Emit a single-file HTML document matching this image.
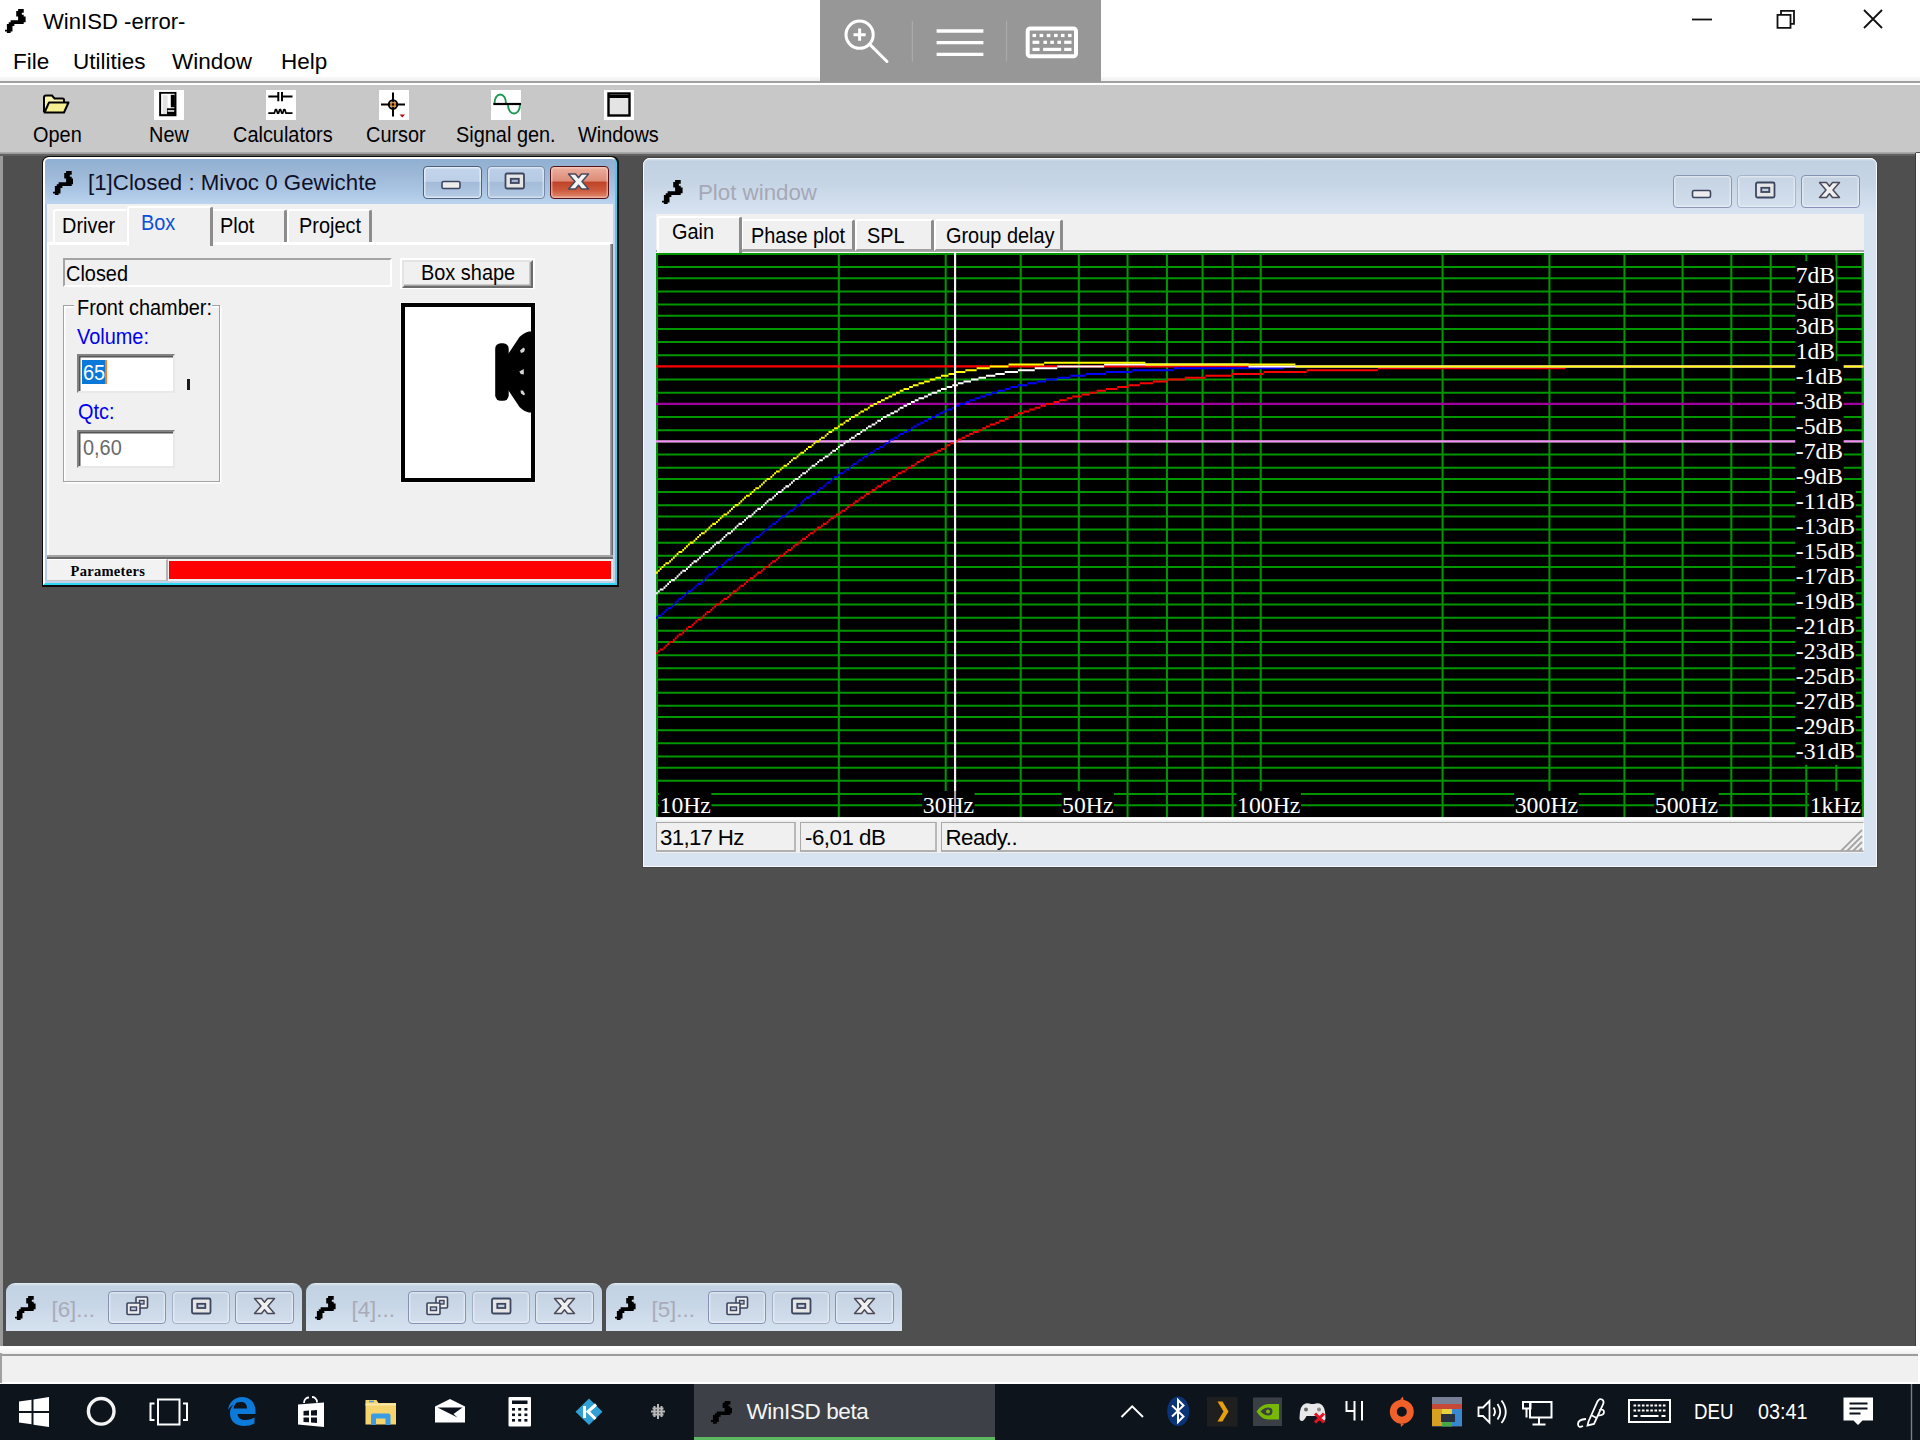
<!DOCTYPE html>
<html>
<head>
<meta charset="utf-8">
<title>WinISD</title>
<style>
*{box-sizing:border-box;margin:0;padding:0}
html,body{width:1920px;height:1440px;overflow:hidden;background:#505050;font-family:"Liberation Sans",sans-serif;color:#000}
.abs{position:absolute}
.t{position:absolute;white-space:nowrap;line-height:1}
#top{left:0;top:0;width:1920px;height:78px;background:#fff}
#overlay{left:819.500px;top:0;width:281px;height:81.600px;background:#979797}
#tbsep{left:0;top:76.500px;width:1920px;height:9px;background:linear-gradient(#f8f8f8 0,#f1f1f1 3.800px,#a4a4a4 4.400px,#8e8e8e 5.100px,#b0b0b0 5.900px,#fff 6.500px,#fff 7.700px,#d4d4d4 8.500px,#c8c8c8 9px)}
#toolbar{left:0;top:85px;width:1920px;height:68px;background:#c8c8c8}
#mdi{left:0;top:152px;width:1920px;height:1194px;background:#4f4f4f}
#status{left:0;top:1346px;width:1918px;height:36px;background:#f0f0f0}
#taskbar{left:0;top:1384px;width:1920px;height:56px;background:#0e141c}
.tl{font-size:22.5px;transform:scaleX(.885);transform-origin:0 0}
.ico{position:absolute;top:90px;width:30px;height:30px;background:#fff}
.ms{font-size:22.5px;transform:scaleX(.885);transform-origin:0 0}
.cb{position:absolute;border-radius:4px}
.sunk{position:absolute;background:#fff;border:2px solid;border-color:#828282 #e8e8e8 #e8e8e8 #828282;box-shadow:inset 1.5px 1.5px 0 #555}
</style>
</head>
<body>
<div id="top" class="abs"></div>
<div id="tbsep" class="abs"></div>
<div id="overlay" class="abs"></div>
<div id="toolbar" class="abs"></div>
<div id="mdi" class="abs"></div>
<div class="abs" style="left:0;top:151.800px;width:1916px;height:4.600px;background:linear-gradient(#b0b0b0 0,#989898 45%,#626262 50%,#5e5e5e 100%)"></div>
<div class="abs" style="left:0;top:156px;width:3px;height:1190px;background:#9a9a9a"></div>
<div class="abs" style="left:1915px;top:152.500px;width:1px;height:1193.500px;background:#3c3c3c"></div><div class="abs" style="left:1916px;top:152.500px;width:4px;height:1194px;background:#fbfbfb"></div>
<div class="abs" style="left:0;top:1346px;width:1920px;height:38px;background:#fff"></div>
<div id="status" class="abs"></div>
<div class="abs" style="left:0;top:1346px;width:1920px;height:7px;background:linear-gradient(#fff,#f4f4f4)"></div>
<div class="abs" style="left:0;top:1353.500px;width:1918px;height:2.200px;background:#9c9c9c"></div>
<div class="abs" style="left:0;top:1353px;width:2px;height:30px;background:#a0a0a0"></div>
<div id="taskbar" class="abs"></div>

<!-- title + menu -->
<svg class="abs" style="left:5.4px;top:9.1px" width="20.6" height="24.4" viewBox="0 0 11 13" preserveAspectRatio="none"><path d="M7 0h3v1.04h-3zM6 1h4v1.04h-4zM6 2h3v1.04h-3zM6 3h4v1.04h-4zM7 4h4v1.04h-4zM7 5h4v1.04h-4zM3 6h8v1.04h-8zM2 7h8v1.04h-8zM1 8h4v1.04h-4zM1 9h3v1.04h-3zM1 10h3v1.04h-3zM0 11h4v1.04h-4zM1 12h2v1.04h-2z" fill="#000"/></svg>
<div class="t" style="left:43px;top:11px;font-size:22.1px">WinISD -error-</div>
<div class="t" style="left:13px;top:51px;font-size:22.5px">File</div>
<div class="t" style="left:73px;top:51px;font-size:22.5px">Utilities</div>
<div class="t" style="left:172px;top:51px;font-size:22.5px">Window</div>
<div class="t" style="left:281px;top:51px;font-size:22.5px">Help</div>

<!-- window controls -->
<svg class="abs" style="left:1680px;top:0" width="240" height="44" viewBox="0 0 240 44" fill="none" stroke="#111" stroke-width="1.8">
<path d="M12 19.5H32"/>
<path d="M97.5 14.800h13v13h-13zM101 14.800v-4h13v13h-3.500"/>
<path d="M184 10l18 18M202 10l-18 18"/>
</svg>

<!-- overlay icons -->
<svg class="abs" style="left:819px;top:0" width="282" height="82" viewBox="0 0 282 82" fill="none" stroke="#fff" stroke-width="3" stroke-linecap="round">
<circle cx="40.600" cy="34.700" r="13.600"/><path d="M51 44.600L68 61.500"/><path d="M34.500 34.700h12.200M40.600 28.600v12.200" stroke-linecap="butt"/>
<path d="M93.400 21v40M187.500 21v40" stroke="#aaa" stroke-width="1.200"/>
<path d="M117.600 31h46.800M117.600 42.600h46.800M117.600 54.400h46.800" stroke-linecap="butt" stroke-width="3.300"/>
<rect x="208.700" y="28.400" width="48.300" height="27.800" rx="2.500" stroke-width="4"/>
<g stroke="none" fill="#fff"><rect x="213.500" y="33.900" width="3.600" height="3.200"/><rect x="220.600" y="33.900" width="3.600" height="3.200"/><rect x="227.800" y="33.900" width="3.600" height="3.200"/><rect x="235" y="33.900" width="3.600" height="3.200"/><rect x="241.900" y="33.900" width="3.600" height="3.200"/><rect x="249" y="33.900" width="3.600" height="3.200"/>
<rect x="213.500" y="40.700" width="6.800" height="3.200"/><rect x="224.400" y="40.700" width="3.600" height="3.200"/><rect x="231.300" y="40.700" width="3.600" height="3.200"/><rect x="238.400" y="40.700" width="3.600" height="3.200"/><rect x="245.200" y="40.700" width="7.300" height="3.200"/>
<rect x="213.500" y="47.800" width="7.100" height="3.200"/><rect x="224.100" y="47.800" width="18.100" height="3.200"/><rect x="245.200" y="47.800" width="7.300" height="3.200"/></g>
</svg>

<!-- toolbar icons -->
<div class="ico" style="left:154px"></div>
<div class="ico" style="left:266px"></div>
<div class="ico" style="left:379px"></div>
<div class="ico" style="left:491px"></div>
<div class="ico" style="left:604px"></div>
<svg class="abs" style="left:40px;top:90px" width="34" height="30" viewBox="0 0 34 30"><path d="M4 22V7.500q0-2 2-2h6l2.500 3h8q1.500 0 1.500 1.500V12" fill="#f8f4b0" stroke="#000" stroke-width="2"/><path d="M4.500 22.500L9 12.500h19.500L24 22.500z" fill="#f6f090" stroke="#000" stroke-width="2" stroke-linejoin="round"/></svg>
<svg class="abs" style="left:154px;top:90px" width="30" height="30" viewBox="0 0 30 30"><rect x="6.200" y="3" width="15.200" height="22.200" fill="#e2e2e2" stroke="#000" stroke-width="2.100"/><path d="M8 24V4.500H20.500" stroke="#fff" stroke-width="1.400" fill="none"/><rect x="13.600" y="4.800" width="3.400" height="13.400" fill="#fff"/><rect x="16.800" y="4.800" width="4" height="12.400" fill="#000"/><rect x="13" y="18.300" width="8" height="6.300" fill="#000"/><rect x="13.600" y="20.200" width="6.600" height="1.500" fill="#fff"/></svg>
<svg class="abs" style="left:266px;top:90px" width="30" height="30" viewBox="0 0 30 30" fill="none" stroke="#000" stroke-width="2"><path d="M2.300 6.500h10.500M16.500 6.500h10M12.300 2v9.200M16 2v9.200"/><path d="M2.300 23.200H8.300l1.200-3.700h.9l1.200 3.700h.9l1.200-3.700h.9l1.200 3.700h.9l1.200-3.700h.9l1.200 3.700H26.500" stroke-width="1.700" stroke-linejoin="round"/></svg>
<svg class="abs" style="left:379px;top:90px" width="30" height="30" viewBox="0 0 30 30" fill="none" stroke="#000" stroke-width="2"><path d="M2 14.500h24M14 2.500v24"/><circle cx="14" cy="14.500" r="4.200" stroke="#000"/><circle cx="14" cy="14.500" r="2" stroke="#d88020" stroke-width="1.6"/><path d="M20.500 24.500h5.500l-2.700 3z" fill="#b01010" stroke="none"/></svg>
<svg class="abs" style="left:491px;top:90px" width="30" height="30" viewBox="0 0 30 30" fill="none" stroke="#000" stroke-width="2"><path d="M3.500 13.500c0-12 11.500-12 11.500 0M17 14.500c0 12 12 12 12 0" stroke="#1a9850" stroke-width="1.900"/><path d="M2.300 14h27.700" stroke-width="2.200"/></svg>
<svg class="abs" style="left:604px;top:90px" width="30" height="30" viewBox="0 0 30 30"><rect x="4.500" y="3.500" width="21" height="22" fill="#e4e4e4" stroke="#000" stroke-width="2.4"/><path d="M4 6.500h22" stroke="#000" stroke-width="3"/></svg>

<!-- toolbar labels -->
<div class="t tl" style="left:33px;top:123.8px">Open</div>
<div class="t tl" style="left:149px;top:123.8px">New</div>
<div class="t tl" style="left:233px;top:123.8px">Calculators</div>
<div class="t tl" style="left:366px;top:123.8px">Cursor</div>
<div class="t tl" style="left:456px;top:123.8px">Signal gen.</div>
<div class="t tl" style="left:578px;top:123.8px">Windows</div>
<!-- window 1 -->
<div class="abs" style="left:42px;top:156px;width:576.700px;height:430.600px;background:#0a0a0a;border-radius:7px 7px 0 0"></div>
<div class="abs" style="left:43px;top:157px;width:574px;height:428px;border-radius:6px 6px 0 0;border:2px solid;border-color:#fff #3dd0f5 #2cd8f4 #fff;background:#c3d1ea"></div>
<div class="abs" style="left:45px;top:159px;width:570px;height:45.500px;border-radius:4px 4px 0 0;background:linear-gradient(#8fb0d2 0,#9cb7d6 30%,#aac6e4 70%,#bdd5ef 100%)"></div>
<div class="abs" style="left:45px;top:204px;width:1.700px;height:377px;background:#b4cbe8"></div>
<div class="abs" style="left:46.700px;top:204px;width:566.100px;height:376.800px;background:#f0f0f0"></div>
<svg class="abs" style="left:52.8px;top:170.8px" width="20.6" height="24.4" viewBox="0 0 11 13" preserveAspectRatio="none"><path d="M7 0h3v1.04h-3zM6 1h4v1.04h-4zM6 2h3v1.04h-3zM6 3h4v1.04h-4zM7 4h4v1.04h-4zM7 5h4v1.04h-4zM3 6h8v1.04h-8zM2 7h8v1.04h-8zM1 8h4v1.04h-4zM1 9h3v1.04h-3zM1 10h3v1.04h-3zM0 11h4v1.04h-4zM1 12h2v1.04h-2z" fill="#000"/></svg>
<div class="t" style="left:88px;top:172px;font-size:22.3px;color:#101028">[1]Closed : Mivoc 0 Gewichte</div>
<!-- caption buttons -->
<div class="cb" style="left:422.500px;top:165.500px;width:59px;height:33px;border:1.500px solid #4e607e;box-shadow:inset 0 0 0 1.500px rgba(255,255,255,.55);background:linear-gradient(#c3d5eb 0,#bdd0e8 46%,#a3bbd8 50%,#b5cbe6 100%)"></div>
<div class="cb" style="left:486.500px;top:165.500px;width:58px;height:33px;border:1.500px solid #7589a8;box-shadow:inset 0 0 0 1.500px rgba(255,255,255,.45);background:linear-gradient(#bdd0e8 0,#b6cae4 46%,#a4bcd9 50%,#b3c9e4 100%)"></div>
<div class="cb" style="left:549.500px;top:165.500px;width:59.5px;height:33px;border:1.800px solid #561018;box-shadow:inset 0 0 0 1.500px rgba(255,220,210,.5);background:linear-gradient(#eeb0a0 0,#dc8c78 44%,#c04428 50%,#cc5a3c 75%,#e08c70 100%)"></div>
<svg class="abs" style="left:422px;top:165px" width="190" height="34" viewBox="0 0 190 34">
<rect x="20" y="16.500" width="18" height="7" rx="1.500" fill="#ececec" stroke="#3c4660" stroke-width="1.600"/>
<rect x="83.500" y="8.500" width="18.500" height="15" rx="1.500" fill="#e6e6e6" stroke="#3c4660" stroke-width="1.800"/>
<rect x="88.800" y="13.800" width="8" height="4.200" fill="#aab4cc" stroke="#3c4660" stroke-width="1.800"/>
<path d="M146.500 9h7l3 3.800 3-3.800h7l-6.500 7.500 6.500 7.500h-7l-3-3.800-3 3.800h-7l6.500-7.500z" fill="#f4f4f4" stroke="#4a4a5a" stroke-width="1.500" stroke-linejoin="round"/>
</svg>
<!-- tabs -->
<div class="abs" style="left:52.500px;top:208.700px;width:75px;height:34.300px;border-top:2px solid #fff;border-left:2px solid #fff;border-right:2px solid #f0f0f0;border-radius:3px 3px 0 0"></div>
<div class="abs" style="left:211px;top:208.700px;width:76px;height:34.300px;border-top:2px solid #fff;border-left:2px solid #fff;border-right:3px solid #8c8c8c;border-radius:3px 3px 0 0"></div>
<div class="abs" style="left:287px;top:208.700px;width:85px;height:34.300px;border-top:2px solid #fff;border-left:2px solid #fff;border-right:3px solid #8c8c8c;border-radius:3px 3px 0 0"></div>
<div class="abs" style="left:47px;top:242px;width:564px;height:2.500px;background:#fff"></div>
<div class="abs" style="left:126.500px;top:205.500px;width:86px;height:40px;background:#f0f0f0;border-top:2px solid #fff;border-left:2px solid #fff;border-right:3.500px solid #8c8c8c;border-radius:3px 3px 0 0"></div>
<div class="abs" style="left:47px;top:244px;width:2px;height:312px;background:#fff"></div>
<div class="abs" style="left:610px;top:244px;width:2.800px;height:315px;background:linear-gradient(90deg,#a4a4a4 45%,#6a6a6a 55%)"></div>
<div class="abs" style="left:47px;top:555px;width:565.800px;height:4px;background:linear-gradient(#a4a4a4 48%,#6a6a6a 52%)"></div>
<div class="t ms" style="left:62px;top:215.2px">Driver</div>
<div class="t ms" style="left:141px;top:212px;color:#0a50d8">Box</div>
<div class="t ms" style="left:220px;top:215.2px">Plot</div>
<div class="t ms" style="left:298.500px;top:215.2px">Project</div>
<!-- closed field -->
<div class="abs" style="left:62.500px;top:258px;width:329.500px;height:29px;border:2px solid;border-color:#a4a4a4 #fff #fff #a4a4a4;background:#f0f0f0"></div>
<div class="t ms" style="left:66px;top:262.5px">Closed</div>
<!-- box shape button -->
<div class="abs" style="left:400px;top:257.500px;width:135px;height:31.500px;border:2px solid;border-color:#fff #fff #fff #fff;background:#f0f0f0"></div>
<div class="abs" style="left:402px;top:259.500px;width:131px;height:28.500px;border:2px solid;border-color:#e4e4e4 #6c6c6c #6c6c6c #e4e4e4;box-shadow:inset -1.500px -1.500px 0 #a4a4a4;background:#f0f0f0"></div>
<div class="t ms" style="left:421px;top:262.2px">Box shape</div>
<!-- group box -->
<div class="abs" style="left:62.500px;top:305px;width:157px;height:177px;border:1.500px solid #a2a2a2;box-shadow:1.500px 1.500px 0 #fff,inset 1.500px 1.500px 0 #fff"></div>
<div class="abs" style="left:74px;top:298px;width:138px;height:20px;background:#f0f0f0"></div>
<div class="t ms" style="left:77px;top:296.7px">Front chamber:</div>
<div class="t ms" style="left:76.500px;top:325.7px;color:#0000f0">Volume:</div>
<div class="sunk" style="left:77px;top:354px;width:98px;height:38.500px"></div>
<div class="abs" style="left:82.200px;top:360.200px;width:23px;height:23.700px;background:#0a78d8"></div>
<div class="abs" style="left:105.200px;top:360.200px;width:1.900px;height:23.700px;background:#f58220"></div>
<div class="t ms" style="left:83px;top:362.2px;color:#fff">65</div>
<div class="abs" style="left:187px;top:379px;width:2.800px;height:11px;background:#1a1a1a"></div>
<div class="t ms" style="left:78px;top:401.2px;color:#0000f0">Qtc:</div>
<div class="sunk" style="left:77px;top:429.500px;width:98px;height:38px"></div>
<div class="t ms" style="left:83px;top:437.4px;color:#6a6a6a">0,60</div>
<!-- box picture -->
<div class="abs" style="left:399.500px;top:302px;width:136px;height:181px;background:#f8f8f8"></div>
<div class="abs" style="left:400.500px;top:303px;width:134px;height:179px;background:#fff;border:4.500px solid #000"></div>
<svg class="abs" style="left:490px;top:326px" width="42" height="92" viewBox="0 0 42 92">
<rect x="5.200" y="17.200" width="13.500" height="57.600" rx="5.500" fill="#000"/>
<path d="M17.500 29L29.500 11Q34 6.500 39 5.500H41.500V86.500H39Q34 85.500 29.500 81L17.500 63z" fill="#000"/>
<path d="M30 24.500l3.500-3 1.500 1.500-1 3-3 1zM29.300 45.500l4.500-2.500v5.500l-3-.5zM30.500 64.500l2.500 0 2 3.500-1 1.500-3-2z" fill="#d4d4d4"/>
</svg>
<!-- status -->
<div class="abs" style="left:47px;top:559px;width:121px;height:21.500px;background:#f2f2f2;border-right:2px solid #b4b4b4;border-bottom:1.500px solid #c4c4c4;border-top:1.500px solid #fff"></div>
<div class="abs" style="left:168.800px;top:560.600px;width:442.300px;height:18.600px;background:#ff0000"></div>
<div class="t" style="left:70.500px;top:563.600px;font-family:'Liberation Serif',serif;font-weight:bold;font-size:14.500px;letter-spacing:0.300px">Parameters</div>
<!-- plot window -->
<div class="abs" style="left:643px;top:157.500px;width:1234px;height:709px;border-radius:7px 7px 0 0;background:#d7e3f1;box-shadow:0 0 0 1px #444"></div>
<div class="abs" style="left:643px;top:157.500px;width:1234px;height:56.500px;border-radius:7px 7px 0 0;background:linear-gradient(#e4ecf4 0,#c2d1e1 3px,#c6d5e5 45%,#d7e3f1 100%)"></div>
<div class="abs" style="left:643px;top:157.500px;width:1234px;height:709px;border-radius:7px 7px 0 0;border:1.800px solid #f6f9fd"></div>
<div class="abs" style="left:656px;top:213.500px;width:1208px;height:639px;background:#f0f0f0"></div>
<svg class="abs" style="left:662px;top:180px" width="20.6" height="24.4" viewBox="0 0 11 13" preserveAspectRatio="none"><path d="M7 0h3v1.04h-3zM6 1h4v1.04h-4zM6 2h3v1.04h-3zM6 3h4v1.04h-4zM7 4h4v1.04h-4zM7 5h4v1.04h-4zM3 6h8v1.04h-8zM2 7h8v1.04h-8zM1 8h4v1.04h-4zM1 9h3v1.04h-3zM1 10h3v1.04h-3zM0 11h4v1.04h-4zM1 12h2v1.04h-2z" fill="#000"/></svg>
<div class="t" style="left:698px;top:182px;font-size:22.3px;color:#a6a8b6">Plot window</div>
<!-- caption buttons -->
<div class="cb" style="left:1673px;top:174.500px;width:59px;height:33px;border:1.500px solid #8a96b4;box-shadow:inset 0 0 0 1.500px rgba(255,255,255,.4);background:linear-gradient(#c4d2e2,#d2deec)"></div>
<div class="cb" style="left:1736.500px;top:174.500px;width:59px;height:33px;border:1.500px solid #a8b4cc;box-shadow:inset 0 0 0 1.500px rgba(255,255,255,.4);background:linear-gradient(#c6d4e4,#d4e0ee)"></div>
<div class="cb" style="left:1800.500px;top:174.500px;width:59px;height:33px;border:1.500px solid #8590b4;box-shadow:inset 0 0 0 1.500px rgba(255,255,255,.4);background:linear-gradient(#c4d2e2,#d2deec)"></div>
<svg class="abs" style="left:1673px;top:174px" width="190" height="34" viewBox="0 0 190 34">
<rect x="19.500" y="16.500" width="18" height="7" rx="1.500" fill="#ececec" stroke="#3c4660" stroke-width="1.600"/>
<rect x="83" y="8.500" width="18.500" height="15" rx="1.500" fill="#e6e6e6" stroke="#3c4660" stroke-width="1.800"/>
<rect x="88.300" y="13.800" width="8" height="4.200" fill="#c8cede" stroke="#3c4660" stroke-width="1.800"/>
<path d="M146.500 8.500h7l3 3.800 3-3.800h7l-6.500 7.500 6.500 7.500h-7l-3-3.800-3 3.800h-7l6.500-7.500z" fill="#f0f0f0" stroke="#4a4a5a" stroke-width="1.500" stroke-linejoin="round"/>
</svg>
<!-- tabs -->
<div class="abs" style="left:656px;top:249.500px;width:1208px;height:2px;background:#a8a8a8"></div>
<div class="abs" style="left:656px;top:251.500px;width:1208px;height:1.500px;background:#fff"></div>
<div class="abs" style="left:741px;top:219px;width:113.500px;height:31.500px;background:#f0f0f0;border-top:2px solid #fff;border-left:2px solid #fff;border-right:3px solid #8c8c8c;border-bottom:2px solid #a0a0a0;border-radius:3px 3px 0 0"></div>
<div class="abs" style="left:855px;top:219px;width:78.500px;height:31.500px;background:#f0f0f0;border-top:2px solid #fff;border-left:2px solid #fff;border-right:3px solid #8c8c8c;border-bottom:2px solid #a0a0a0;border-radius:3px 3px 0 0"></div>
<div class="abs" style="left:934px;top:219px;width:129px;height:31.500px;background:#f0f0f0;border-top:2px solid #fff;border-left:2px solid #fff;border-right:3px solid #8c8c8c;border-bottom:2px solid #a0a0a0;border-radius:3px 3px 0 0"></div>
<div class="abs" style="left:657px;top:215.500px;width:85px;height:38px;background:#f0f0f0;border-top:2px solid #fff;border-left:2px solid #fff;border-right:3px solid #8c8c8c;border-radius:3px 3px 0 0"></div>
<div class="t ms" style="left:672px;top:221.4px">Gain</div>
<div class="t ms" style="left:751px;top:224.9px">Phase plot</div>
<div class="t ms" style="left:867px;top:224.9px">SPL</div>
<div class="t ms" style="left:945.500px;top:224.9px">Group delay</div>
<svg class="abs" style="left:656.25px;top:253.125px" width="1207.5" height="563.975" viewBox="0 0 644 300.8" preserveAspectRatio="none">
<rect width="644" height="301" fill="#000"/>
<path d="M0 0.5H644M0 7.5H644M0 13.5H644M0 20.5H644M0 27.5H644M0 33.5H644M0 40.5H644M0 47.5H644M0 54.5H644M0 67.5H644M0 74.5H644M0 80.5H644M0 87.5H644M0 94.5H644M0 100.5H644M0 107.5H644M0 114.5H644M0 120.5H644M0 127.5H644M0 134.5H644M0 140.5H644M0 147.5H644M0 154.5H644M0 161.5H644M0 167.5H644M0 174.5H644M0 181.5H644M0 187.5H644M0 194.5H644M0 201.5H644M0 207.5H644M0 214.5H644M0 221.5H644M0 227.5H644M0 234.5H644M0 241.5H644M0 247.5H644M0 254.5H644M0 261.5H644M0 268.5H644M0 274.5H644M0 281.5H644M0 288.5H644M0 294.5H644" stroke="#009600" stroke-width="1.08" fill="none"/>
<path d="M0.5 0V301M97.5 0V301M154.5 0V301M194.5 0V301M225.5 0V301M251.5 0V301M272.5 0V301M291.5 0V301M307.5 0V301M322.5 0V301M419.5 0V301M476.5 0V301M516.5 0V301M547.5 0V301M573.5 0V301M594.5 0V301M613.5 0V301M629.5 0V301M643.5 0V301" stroke="#009600" stroke-width="1.08" fill="none"/>
<path d="M0 80.5H644" stroke="#a000a0" stroke-width="1.15"/>
<path d="M0 100.5H644" stroke="#fa8cfa" stroke-width="1.18"/>
<path d="M0 60.5H644" stroke="#ff0000" stroke-width="1.15"/>
<path d="M0 213.5H1M1 212.5H2M2 211.5H4M4 210.5H5M5 209.5H6M6 208.5H7M7 207.5H9M9 206.5H10M10 205.5H11M11 204.5H12M12 203.5H14M14 202.5H15M15 201.5H16M16 200.5H17M17 199.5H19M19 198.5H20M20 197.5H21M21 196.5H22M22 195.5H24M24 194.5H25M25 193.5H26M26 192.5H27M27 191.5H29M29 190.5H30M30 189.5H31M31 188.5H32M32 187.5H34M34 186.5H35M35 185.5H36M36 184.5H38M38 183.5H39M39 182.5H40M40 181.5H41M41 180.5H43M43 179.5H44M44 178.5H45M45 177.5H47M47 176.5H48M48 175.5H49M49 174.5H50M50 173.5H52M52 172.5H53M53 171.5H54M54 170.5H56M56 169.5H57M57 168.5H58M58 167.5H60M60 166.5H61M61 165.5H62M62 164.5H64M64 163.5H65M65 162.5H66M66 161.5H68M68 160.5H69M69 159.5H70M70 158.5H72M72 157.5H73M73 156.5H74M74 155.5H76M76 154.5H77M77 153.5H78M78 152.5H80M80 151.5H81M81 150.5H82M82 149.5H84M84 148.5H85M85 147.5H86M86 146.5H88M88 145.5H89M89 144.5H91M91 143.5H92M92 142.5H93M93 141.5H95M95 140.5H96M96 139.5H98M98 138.5H99M99 137.5H101M101 136.5H102M102 135.5H103M103 134.5H105M105 133.5H106M106 132.5H108M108 131.5H109M109 130.5H111M111 129.5H112M112 128.5H114M114 127.5H115M115 126.5H117M117 125.5H118M118 124.5H120M120 123.5H121M121 122.5H123M123 121.5H125M125 120.5H126M126 119.5H128M128 118.5H129M129 117.5H131M131 116.5H133M133 115.5H134M134 114.5H136M136 113.5H138M138 112.5H139M139 111.5H141M141 110.5H143M143 109.5H144M144 108.5H146M146 107.5H148M148 106.5H150M150 105.5H152M152 104.5H154M154 103.5H155M155 102.5H157M157 101.5H159M159 100.5H161M161 99.5H163M163 98.5H165M165 97.5H167M167 96.5H169M169 95.5H172M172 94.5H174M174 93.5H176M176 92.5H178M178 91.5H181M181 90.5H183M183 89.5H186M186 88.5H188M188 87.5H191M191 86.5H193M193 85.5H196M196 84.5H199M199 83.5H202M202 82.5H205M205 81.5H208M208 80.5H212M212 79.5H215M215 78.5H219M219 77.5H222M222 76.5H227M227 75.5H231M231 74.5H235M235 73.5H240M240 72.5H246M246 71.5H252M252 70.5H258M258 69.5H265M265 68.5H273M273 67.5H282M282 66.5H293M293 65.5H307M307 64.5H324M324 63.5H347M347 62.5H385M385 61.5H485M485 60.5H644" stroke="#ff0000" stroke-width="1.12" fill="none"/>
<path d="M0 194.5H1M1 193.5H3M3 192.5H4M4 191.5H5M5 190.5H6M6 189.5H8M8 188.5H9M9 187.5H10M10 186.5H11M11 185.5H12M12 184.5H14M14 183.5H15M15 182.5H16M16 181.5H17M17 180.5H19M19 179.5H20M20 178.5H21M21 177.5H22M22 176.5H24M24 175.5H25M25 174.5H26M26 173.5H27M27 172.5H28M28 171.5H30M30 170.5H31M31 169.5H32M32 168.5H33M33 167.5H35M35 166.5H36M36 165.5H37M37 164.5H38M38 163.5H40M40 162.5H41M41 161.5H42M42 160.5H43M43 159.5H45M45 158.5H46M46 157.5H47M47 156.5H48M48 155.5H50M50 154.5H51M51 153.5H52M52 152.5H53M53 151.5H55M55 150.5H56M56 149.5H57M57 148.5H58M58 147.5H60M60 146.5H61M61 145.5H62M62 144.5H64M64 143.5H65M65 142.5H66M66 141.5H67M67 140.5H69M69 139.5H70M70 138.5H71M71 137.5H73M73 136.5H74M74 135.5H75M75 134.5H77M77 133.5H78M78 132.5H79M79 131.5H80M80 130.5H82M82 129.5H83M83 128.5H85M85 127.5H86M86 126.5H87M87 125.5H89M89 124.5H90M90 123.5H91M91 122.5H93M93 121.5H94M94 120.5H95M95 119.5H97M97 118.5H98M98 117.5H100M100 116.5H101M101 115.5H103M103 114.5H104M104 113.5H105M105 112.5H107M107 111.5H108M108 110.5H110M110 109.5H111M111 108.5H113M113 107.5H114M114 106.5H116M116 105.5H117M117 104.5H119M119 103.5H121M121 102.5H122M122 101.5H124M124 100.5H125M125 99.5H127M127 98.5H129M129 97.5H130M130 96.5H132M132 95.5H134M134 94.5H136M136 93.5H137M137 92.5H139M139 91.5H141M141 90.5H143M143 89.5H145M145 88.5H147M147 87.5H149M149 86.5H151M151 85.5H153M153 84.5H155M155 83.5H158M158 82.5H160M160 81.5H162M162 80.5H165M165 79.5H167M167 78.5H170M170 77.5H173M173 76.5H176M176 75.5H179M179 74.5H182M182 73.5H186M186 72.5H189M189 71.5H193M193 70.5H198M198 69.5H203M203 68.5H208M208 67.5H214M214 66.5H221M221 65.5H229M229 64.5H240M240 63.5H254M254 62.5H276M276 61.5H335M335 60.5H644" stroke="#0000ff" stroke-width="1.12" fill="none"/>
<path d="M0 181.5H1M1 180.5H2M2 179.5H4M4 178.5H5M5 177.5H6M6 176.5H7M7 175.5H8M8 174.5H10M10 173.5H11M11 172.5H12M12 171.5H13M13 170.5H14M14 169.5H16M16 168.5H17M17 167.5H18M18 166.5H19M19 165.5H20M20 164.5H22M22 163.5H23M23 162.5H24M24 161.5H25M25 160.5H26M26 159.5H28M28 158.5H29M29 157.5H30M30 156.5H31M31 155.5H32M32 154.5H34M34 153.5H35M35 152.5H36M36 151.5H37M37 150.5H38M38 149.5H40M40 148.5H41M41 147.5H42M42 146.5H43M43 145.5H44M44 144.5H46M46 143.5H47M47 142.5H48M48 141.5H49M49 140.5H51M51 139.5H52M52 138.5H53M53 137.5H54M54 136.5H56M56 135.5H57M57 134.5H58M58 133.5H59M59 132.5H60M60 131.5H62M62 130.5H63M63 129.5H64M64 128.5H65M65 127.5H67M67 126.5H68M68 125.5H69M69 124.5H71M71 123.5H72M72 122.5H73M73 121.5H74M74 120.5H76M76 119.5H77M77 118.5H78M78 117.5H80M80 116.5H81M81 115.5H82M82 114.5H83M83 113.5H85M85 112.5H86M86 111.5H87M87 110.5H89M89 109.5H90M90 108.5H92M92 107.5H93M93 106.5H94M94 105.5H96M96 104.5H97M97 103.5H98M98 102.5H100M100 101.5H101M101 100.5H103M103 99.5H104M104 98.5H106M106 97.5H107M107 96.5H109M109 95.5H110M110 94.5H112M112 93.5H113M113 92.5H115M115 91.5H117M117 90.5H118M118 89.5H120M120 88.5H121M121 87.5H123M123 86.5H125M125 85.5H127M127 84.5H129M129 83.5H130M130 82.5H132M132 81.5H134M134 80.5H136M136 79.5H138M138 78.5H140M140 77.5H143M143 76.5H145M145 75.5H147M147 74.5H150M150 73.5H152M152 72.5H155M155 71.5H158M158 70.5H161M161 69.5H164M164 68.5H168M168 67.5H172M172 66.5H176M176 65.5H181M181 64.5H186M186 63.5H193M193 62.5H202M202 61.5H214M214 60.5H239M239 59.5H316M316 60.5H644" stroke="#ffffff" stroke-width="1.12" fill="none"/>
<path d="M0 170.5H1M1 169.5H2M2 168.5H3M3 167.5H4M4 166.5H5M5 165.5H7M7 164.5H8M8 163.5H9M9 162.5H10M10 161.5H11M11 160.5H12M12 159.5H14M14 158.5H15M15 157.5H16M16 156.5H17M17 155.5H18M18 154.5H20M20 153.5H21M21 152.5H22M22 151.5H23M23 150.5H24M24 149.5H26M26 148.5H27M27 147.5H28M28 146.5H29M29 145.5H30M30 144.5H32M32 143.5H33M33 142.5H34M34 141.5H35M35 140.5H36M36 139.5H38M38 138.5H39M39 137.5H40M40 136.5H41M41 135.5H42M42 134.5H44M44 133.5H45M45 132.5H46M46 131.5H47M47 130.5H48M48 129.5H50M50 128.5H51M51 127.5H52M52 126.5H53M53 125.5H55M55 124.5H56M56 123.5H57M57 122.5H58M58 121.5H59M59 120.5H61M61 119.5H62M62 118.5H63M63 117.5H64M64 116.5H66M66 115.5H67M67 114.5H68M68 113.5H70M70 112.5H71M71 111.5H72M72 110.5H73M73 109.5H75M75 108.5H76M76 107.5H77M77 106.5H79M79 105.5H80M80 104.5H81M81 103.5H83M83 102.5H84M84 101.5H85M85 100.5H87M87 99.5H88M88 98.5H90M90 97.5H91M91 96.5H92M92 95.5H94M94 94.5H95M95 93.5H97M97 92.5H98M98 91.5H100M100 90.5H101M101 89.5H103M103 88.5H104M104 87.5H106M106 86.5H108M108 85.5H109M109 84.5H111M111 83.5H113M113 82.5H114M114 81.5H116M116 80.5H118M118 79.5H120M120 78.5H122M122 77.5H124M124 76.5H126M126 75.5H128M128 74.5H130M130 73.5H132M132 72.5H135M135 71.5H137M137 70.5H140M140 69.5H143M143 68.5H146M146 67.5H149M149 66.5H152M152 65.5H156M156 64.5H160M160 63.5H165M165 62.5H171M171 61.5H178M178 60.5H188M188 59.5H207M207 58.5H261M261 59.5H341M341 60.5H644" stroke="#ffff00" stroke-width="1.12" fill="none"/>
<path d="M159.5 0V301" stroke="#f4f4f4" stroke-width="1.15"/>
<rect x="607.60" y="4.25" width="21.50" height="15" fill="#000"/>
<text x="607.90" y="16.25" font-family="Liberation Serif" font-size="12.5" fill="#fff" textLength="20.90" lengthAdjust="spacingAndGlyphs">7dB</text>
<rect x="607.60" y="17.61" width="21.50" height="15" fill="#000"/>
<text x="607.90" y="29.61" font-family="Liberation Serif" font-size="12.5" fill="#fff" textLength="20.90" lengthAdjust="spacingAndGlyphs">5dB</text>
<rect x="607.60" y="30.96" width="21.50" height="15" fill="#000"/>
<text x="607.90" y="42.96" font-family="Liberation Serif" font-size="12.5" fill="#fff" textLength="20.90" lengthAdjust="spacingAndGlyphs">3dB</text>
<rect x="607.60" y="44.32" width="21.50" height="15" fill="#000"/>
<text x="607.90" y="56.32" font-family="Liberation Serif" font-size="12.5" fill="#fff" textLength="20.90" lengthAdjust="spacingAndGlyphs">1dB</text>
<rect x="607.60" y="57.67" width="25.80" height="15" fill="#000"/>
<text x="607.90" y="69.67" font-family="Liberation Serif" font-size="12.5" fill="#fff" textLength="25.20" lengthAdjust="spacingAndGlyphs">-1dB</text>
<rect x="607.60" y="71.03" width="25.80" height="15" fill="#000"/>
<text x="607.90" y="83.03" font-family="Liberation Serif" font-size="12.5" fill="#fff" textLength="25.20" lengthAdjust="spacingAndGlyphs">-3dB</text>
<rect x="607.60" y="84.38" width="25.80" height="15" fill="#000"/>
<text x="607.90" y="96.38" font-family="Liberation Serif" font-size="12.5" fill="#fff" textLength="25.20" lengthAdjust="spacingAndGlyphs">-5dB</text>
<rect x="607.60" y="97.74" width="25.80" height="15" fill="#000"/>
<text x="607.90" y="109.74" font-family="Liberation Serif" font-size="12.5" fill="#fff" textLength="25.20" lengthAdjust="spacingAndGlyphs">-7dB</text>
<rect x="607.60" y="111.09" width="25.80" height="15" fill="#000"/>
<text x="607.90" y="123.09" font-family="Liberation Serif" font-size="12.5" fill="#fff" textLength="25.20" lengthAdjust="spacingAndGlyphs">-9dB</text>
<rect x="607.60" y="124.45" width="32.25" height="15" fill="#000"/>
<text x="607.90" y="136.45" font-family="Liberation Serif" font-size="12.5" fill="#fff" textLength="31.65" lengthAdjust="spacingAndGlyphs">-11dB</text>
<rect x="607.60" y="137.80" width="32.25" height="15" fill="#000"/>
<text x="607.90" y="149.80" font-family="Liberation Serif" font-size="12.5" fill="#fff" textLength="31.65" lengthAdjust="spacingAndGlyphs">-13dB</text>
<rect x="607.60" y="151.15" width="32.25" height="15" fill="#000"/>
<text x="607.90" y="163.15" font-family="Liberation Serif" font-size="12.5" fill="#fff" textLength="31.65" lengthAdjust="spacingAndGlyphs">-15dB</text>
<rect x="607.60" y="164.51" width="32.25" height="15" fill="#000"/>
<text x="607.90" y="176.51" font-family="Liberation Serif" font-size="12.5" fill="#fff" textLength="31.65" lengthAdjust="spacingAndGlyphs">-17dB</text>
<rect x="607.60" y="177.86" width="32.25" height="15" fill="#000"/>
<text x="607.90" y="189.86" font-family="Liberation Serif" font-size="12.5" fill="#fff" textLength="31.65" lengthAdjust="spacingAndGlyphs">-19dB</text>
<rect x="607.60" y="191.22" width="32.25" height="15" fill="#000"/>
<text x="607.90" y="203.22" font-family="Liberation Serif" font-size="12.5" fill="#fff" textLength="31.65" lengthAdjust="spacingAndGlyphs">-21dB</text>
<rect x="607.60" y="204.57" width="32.25" height="15" fill="#000"/>
<text x="607.90" y="216.57" font-family="Liberation Serif" font-size="12.5" fill="#fff" textLength="31.65" lengthAdjust="spacingAndGlyphs">-23dB</text>
<rect x="607.60" y="217.93" width="32.25" height="15" fill="#000"/>
<text x="607.90" y="229.93" font-family="Liberation Serif" font-size="12.5" fill="#fff" textLength="31.65" lengthAdjust="spacingAndGlyphs">-25dB</text>
<rect x="607.60" y="231.28" width="32.25" height="15" fill="#000"/>
<text x="607.90" y="243.28" font-family="Liberation Serif" font-size="12.5" fill="#fff" textLength="31.65" lengthAdjust="spacingAndGlyphs">-27dB</text>
<rect x="607.60" y="244.64" width="32.25" height="15" fill="#000"/>
<text x="607.90" y="256.64" font-family="Liberation Serif" font-size="12.5" fill="#fff" textLength="31.65" lengthAdjust="spacingAndGlyphs">-29dB</text>
<rect x="607.60" y="257.99" width="32.25" height="15" fill="#000"/>
<text x="607.90" y="269.99" font-family="Liberation Serif" font-size="12.5" fill="#fff" textLength="31.65" lengthAdjust="spacingAndGlyphs">-31dB</text>
<rect x="1.60" y="286.92" width="27.94" height="16" fill="#000"/>
<text x="1.90" y="298.92" font-family="Liberation Serif" font-size="12.5" fill="#fff" textLength="27.34" lengthAdjust="spacingAndGlyphs">10Hz</text>
<rect x="142.00" y="286.92" width="27.94" height="16" fill="#000"/>
<text x="142.30" y="298.92" font-family="Liberation Serif" font-size="12.5" fill="#fff" textLength="27.34" lengthAdjust="spacingAndGlyphs">30Hz</text>
<rect x="216.30" y="286.92" width="27.94" height="16" fill="#000"/>
<text x="216.60" y="298.92" font-family="Liberation Serif" font-size="12.5" fill="#fff" textLength="27.34" lengthAdjust="spacingAndGlyphs">50Hz</text>
<rect x="309.60" y="286.92" width="34.39" height="16" fill="#000"/>
<text x="309.90" y="298.92" font-family="Liberation Serif" font-size="12.5" fill="#fff" textLength="33.79" lengthAdjust="spacingAndGlyphs">100Hz</text>
<rect x="457.70" y="286.92" width="34.39" height="16" fill="#000"/>
<text x="458.00" y="298.92" font-family="Liberation Serif" font-size="12.5" fill="#fff" textLength="33.79" lengthAdjust="spacingAndGlyphs">300Hz</text>
<rect x="532.40" y="286.92" width="34.39" height="16" fill="#000"/>
<text x="532.70" y="298.92" font-family="Liberation Serif" font-size="12.5" fill="#fff" textLength="33.79" lengthAdjust="spacingAndGlyphs">500Hz</text>
<rect x="615.00" y="286.92" width="27.94" height="16" fill="#000"/>
<text x="615.30" y="298.92" font-family="Liberation Serif" font-size="12.5" fill="#fff" textLength="27.34" lengthAdjust="spacingAndGlyphs">1kHz</text>
<path d="M159.5 286.92V301" stroke="#e8d8e8" stroke-width="1.1" opacity="0.75"/>
</svg>
<!-- status bar -->
<div class="abs" style="left:656px;top:817.500px;width:1208px;height:2.500px;background:#fff"></div>
<div class="abs" style="left:656px;top:821.500px;width:140px;height:30.500px;border:1.500px solid;border-color:#a8a8a8 #fff #fff #a8a8a8;border-right:2px solid #b8b8b8;border-bottom:2px solid #b0b0b0"></div>
<div class="abs" style="left:800px;top:821.500px;width:137px;height:30.500px;border:1.500px solid;border-color:#a8a8a8 #fff #fff #a8a8a8;border-right:2px solid #b8b8b8;border-bottom:2px solid #b0b0b0"></div>
<div class="abs" style="left:941px;top:821.500px;width:923px;height:30.500px;border:1.500px solid;border-color:#a8a8a8 #fff #fff #a8a8a8;border-bottom:2px solid #b0b0b0"></div>
<div class="t" style="left:660px;top:826.500px;font-size:22.3px;letter-spacing:-0.700px">31,17 Hz</div>
<div class="t" style="left:805px;top:826.500px;font-size:22.3px;letter-spacing:-0.500px">-6,01 dB</div>
<div class="t" style="left:945.500px;top:826.500px;font-size:22.3px;letter-spacing:-0.500px">Ready..</div>
<svg class="abs" style="left:1838px;top:828px" width="26" height="24" viewBox="0 0 26 24" stroke="#a4a4a4" stroke-width="1.800"><path d="M3 23L24 2M9 23L24 8M15 23L24 14M21 23l3-3"/></svg>
<!-- minimized windows -->
<div class="abs" style="left:6px;top:1282.500px;width:296px;height:48.500px;border-radius:9px 9px 0 0;background:linear-gradient(#e6eef6 0,#c3d2e2 3px,#c8d7e7 50%,#d6e2f0 100%)"></div>
<svg class="abs" style="left:15.2px;top:1295.8px" width="20.6" height="24.4" viewBox="0 0 11 13" preserveAspectRatio="none"><path d="M7 0h3v1.04h-3zM6 1h4v1.04h-4zM6 2h3v1.04h-3zM6 3h4v1.04h-4zM7 4h4v1.04h-4zM7 5h4v1.04h-4zM3 6h8v1.04h-8zM2 7h8v1.04h-8zM1 8h4v1.04h-4zM1 9h3v1.04h-3zM1 10h3v1.04h-3zM0 11h4v1.04h-4zM1 12h2v1.04h-2z" fill="#000"/></svg>
<div class="t" style="left:51.5px;top:1299px;font-size:22.3px;color:#a9abb8">[6]...</div>
<div class="cb" style="left:107.5px;top:1290.500px;width:58.500px;height:33px;border:1.500px solid #8793b4;box-shadow:inset 0 0 0 1.500px rgba(255,255,255,.4);background:linear-gradient(#c4d2e2,#d2deec)"></div>
<div class="cb" style="left:171.5px;top:1290.500px;width:58.500px;height:33px;border:1.500px solid #a4b0c8;box-shadow:inset 0 0 0 1.500px rgba(255,255,255,.4);background:linear-gradient(#c4d2e2,#d2deec)"></div>
<div class="cb" style="left:235px;top:1290.500px;width:58.500px;height:33px;border:1.500px solid #8793b4;box-shadow:inset 0 0 0 1.500px rgba(255,255,255,.4);background:linear-gradient(#c4d2e2,#d2deec)"></div>
<svg class="abs" style="left:107.5px;top:1290px" width="190" height="34" viewBox="0 0 190 34">
<rect x="28" y="7" width="11.500" height="11" rx="1" fill="#ececec" stroke="#3c4660" stroke-width="1.600"/>
<rect x="31.500" y="10.500" width="4.500" height="3.500" fill="#c8cede" stroke="#3c4660" stroke-width="1.400"/>
<rect x="19" y="13" width="13" height="11.500" rx="1" fill="#ececec" stroke="#3c4660" stroke-width="1.600"/>
<rect x="22.500" y="17" width="6" height="3.500" fill="#c8cede" stroke="#3c4660" stroke-width="1.400"/>
<rect x="84" y="8.500" width="18.500" height="15" rx="1.500" fill="#e6e6e6" stroke="#3c4660" stroke-width="1.800"/>
<rect x="89.300" y="13.800" width="8" height="4.200" fill="#c8cede" stroke="#3c4660" stroke-width="1.800"/>
<path d="M146.500 8.500h7l3 3.800 3-3.800h7l-6.500 7.500 6.500 7.500h-7l-3-3.800-3 3.800h-7l6.500-7.500z" fill="#f0f0f0" stroke="#4a4a5a" stroke-width="1.500" stroke-linejoin="round"/>
</svg>
<div class="abs" style="left:306px;top:1282.500px;width:296px;height:48.500px;border-radius:9px 9px 0 0;background:linear-gradient(#e6eef6 0,#c3d2e2 3px,#c8d7e7 50%,#d6e2f0 100%)"></div>
<svg class="abs" style="left:315.2px;top:1295.8px" width="20.6" height="24.4" viewBox="0 0 11 13" preserveAspectRatio="none"><path d="M7 0h3v1.04h-3zM6 1h4v1.04h-4zM6 2h3v1.04h-3zM6 3h4v1.04h-4zM7 4h4v1.04h-4zM7 5h4v1.04h-4zM3 6h8v1.04h-8zM2 7h8v1.04h-8zM1 8h4v1.04h-4zM1 9h3v1.04h-3zM1 10h3v1.04h-3zM0 11h4v1.04h-4zM1 12h2v1.04h-2z" fill="#000"/></svg>
<div class="t" style="left:351.5px;top:1299px;font-size:22.3px;color:#a9abb8">[4]...</div>
<div class="cb" style="left:407.5px;top:1290.500px;width:58.500px;height:33px;border:1.500px solid #8793b4;box-shadow:inset 0 0 0 1.500px rgba(255,255,255,.4);background:linear-gradient(#c4d2e2,#d2deec)"></div>
<div class="cb" style="left:471.5px;top:1290.500px;width:58.500px;height:33px;border:1.500px solid #a4b0c8;box-shadow:inset 0 0 0 1.500px rgba(255,255,255,.4);background:linear-gradient(#c4d2e2,#d2deec)"></div>
<div class="cb" style="left:535px;top:1290.500px;width:58.500px;height:33px;border:1.500px solid #8793b4;box-shadow:inset 0 0 0 1.500px rgba(255,255,255,.4);background:linear-gradient(#c4d2e2,#d2deec)"></div>
<svg class="abs" style="left:407.5px;top:1290px" width="190" height="34" viewBox="0 0 190 34">
<rect x="28" y="7" width="11.500" height="11" rx="1" fill="#ececec" stroke="#3c4660" stroke-width="1.600"/>
<rect x="31.500" y="10.500" width="4.500" height="3.500" fill="#c8cede" stroke="#3c4660" stroke-width="1.400"/>
<rect x="19" y="13" width="13" height="11.500" rx="1" fill="#ececec" stroke="#3c4660" stroke-width="1.600"/>
<rect x="22.500" y="17" width="6" height="3.500" fill="#c8cede" stroke="#3c4660" stroke-width="1.400"/>
<rect x="84" y="8.500" width="18.500" height="15" rx="1.500" fill="#e6e6e6" stroke="#3c4660" stroke-width="1.800"/>
<rect x="89.300" y="13.800" width="8" height="4.200" fill="#c8cede" stroke="#3c4660" stroke-width="1.800"/>
<path d="M146.500 8.500h7l3 3.800 3-3.800h7l-6.500 7.500 6.500 7.500h-7l-3-3.800-3 3.800h-7l6.500-7.500z" fill="#f0f0f0" stroke="#4a4a5a" stroke-width="1.500" stroke-linejoin="round"/>
</svg>
<div class="abs" style="left:606px;top:1282.500px;width:296px;height:48.500px;border-radius:9px 9px 0 0;background:linear-gradient(#e6eef6 0,#c3d2e2 3px,#c8d7e7 50%,#d6e2f0 100%)"></div>
<svg class="abs" style="left:615.2px;top:1295.8px" width="20.6" height="24.4" viewBox="0 0 11 13" preserveAspectRatio="none"><path d="M7 0h3v1.04h-3zM6 1h4v1.04h-4zM6 2h3v1.04h-3zM6 3h4v1.04h-4zM7 4h4v1.04h-4zM7 5h4v1.04h-4zM3 6h8v1.04h-8zM2 7h8v1.04h-8zM1 8h4v1.04h-4zM1 9h3v1.04h-3zM1 10h3v1.04h-3zM0 11h4v1.04h-4zM1 12h2v1.04h-2z" fill="#000"/></svg>
<div class="t" style="left:651.5px;top:1299px;font-size:22.3px;color:#a9abb8">[5]...</div>
<div class="cb" style="left:707.5px;top:1290.500px;width:58.500px;height:33px;border:1.500px solid #8793b4;box-shadow:inset 0 0 0 1.500px rgba(255,255,255,.4);background:linear-gradient(#c4d2e2,#d2deec)"></div>
<div class="cb" style="left:771.5px;top:1290.500px;width:58.500px;height:33px;border:1.500px solid #a4b0c8;box-shadow:inset 0 0 0 1.500px rgba(255,255,255,.4);background:linear-gradient(#c4d2e2,#d2deec)"></div>
<div class="cb" style="left:835px;top:1290.500px;width:58.500px;height:33px;border:1.500px solid #8793b4;box-shadow:inset 0 0 0 1.500px rgba(255,255,255,.4);background:linear-gradient(#c4d2e2,#d2deec)"></div>
<svg class="abs" style="left:707.5px;top:1290px" width="190" height="34" viewBox="0 0 190 34">
<rect x="28" y="7" width="11.500" height="11" rx="1" fill="#ececec" stroke="#3c4660" stroke-width="1.600"/>
<rect x="31.500" y="10.500" width="4.500" height="3.500" fill="#c8cede" stroke="#3c4660" stroke-width="1.400"/>
<rect x="19" y="13" width="13" height="11.500" rx="1" fill="#ececec" stroke="#3c4660" stroke-width="1.600"/>
<rect x="22.500" y="17" width="6" height="3.500" fill="#c8cede" stroke="#3c4660" stroke-width="1.400"/>
<rect x="84" y="8.500" width="18.500" height="15" rx="1.500" fill="#e6e6e6" stroke="#3c4660" stroke-width="1.800"/>
<rect x="89.300" y="13.800" width="8" height="4.200" fill="#c8cede" stroke="#3c4660" stroke-width="1.800"/>
<path d="M146.500 8.500h7l3 3.800 3-3.800h7l-6.500 7.500 6.500 7.500h-7l-3-3.800-3 3.800h-7l6.500-7.500z" fill="#f0f0f0" stroke="#4a4a5a" stroke-width="1.500" stroke-linejoin="round"/>
</svg>
<!-- taskbar -->
<div class="abs" style="left:694px;top:1384px;width:300.500px;height:56px;background:#3d4147"></div>
<div class="abs" style="left:694px;top:1436.500px;width:300.500px;height:3.500px;background:#5cb860"></div>
<svg class="abs" style="left:0;top:1384px" width="1920" height="56" viewBox="0 1384 1920 56">
<!-- start -->
<path d="M19 1401.500l12.500-1.800v11.300H19zM33.500 1399.400l15.500-2.400v14H33.500zM19 1413h12.500v11.300L19 1422.500zM33.500 1413H49v14l-15.500-2.300z" fill="#fff"/>
<!-- cortana -->
<circle cx="101.200" cy="1411.300" r="12.800" fill="none" stroke="#f4f4f4" stroke-width="3.400"/>
<!-- task view -->
<g fill="none" stroke="#fff" stroke-width="2"><rect x="158" y="1399.500" width="21.500" height="25"/><path d="M154.500 1403.500h-4v16.500h4M183 1403.500h4v16.500h-4"/></g>
<!-- edge -->
<path d="M228 1410c1-8 7-13 14-13 8 0 13.500 5.500 13.500 14v3h-18c.5 4 3.500 6 8 6 3.500 0 6.500-1 9-2.500v6c-3 1.700-6.500 2.500-10.500 2.500-8.500 0-14-5-14-12.500 0-6 3.500-10.500 8.500-12.500-3 2-4.500 4.500-5 7.500h13.500c0-4-2-6.500-5.500-6.500-5 0-10 2.500-13.500 8z" fill="#0c7ad8"/>
<!-- store -->
<g><path d="M298 1404.500l26-2v24.500l-26-2.500z" fill="#fff"/><path d="M304 1403c0-4 3-5.500 5-5.500M317 1402.500c0-4-3-5.500-5-5.500" stroke="#fff" stroke-width="1.800" fill="none"/><path d="M303.500 1411l5.500-.4v4.900h-5.500zM311 1410.500l6-.4v5.400h-6zM303.500 1417.500h5.500v4.800l-5.500-.4zM311 1417.500h6v5.400l-6-.5z" fill="#0b121b"/></g>
<!-- explorer -->
<g><path d="M365.500 1400h11l2 3h17.500v21.500h-30.500z" fill="#f5d36e"/><path d="M365.500 1403.500h30.500v2H365.500z" fill="#fbe9a8"/><path d="M369 1401.500h5" stroke="#4a9be0" stroke-width="1.600"/><path d="M371 1425v-9.500q0-2 2-2h15.500q2 0 2 2v9.500h-5v-6.500h-9.500v6.500z" fill="#3a9de4"/></g>
<!-- mail -->
<g><path d="M435 1406.500l15-7.500 15 7.500v16H435z" fill="#fff"/><path d="M437.500 1407.500h25l-9 6.500 4 3.500z" fill="#0b121b"/></g>
<!-- calculator -->
<g><rect x="508.500" y="1397" width="22.500" height="29.500" rx="1" fill="#fff"/><rect x="512" y="1400.500" width="15.500" height="3.500" fill="#0b121b"/><g fill="#0b121b"><rect x="512" y="1408" width="3" height="2.600"/><rect x="518.200" y="1408" width="3" height="2.600"/><rect x="524.400" y="1408" width="3" height="2.600"/><rect x="512" y="1413.500" width="3" height="2.600"/><rect x="518.200" y="1413.500" width="3" height="2.600"/><rect x="524.400" y="1413.500" width="3" height="2.600"/><rect x="512" y="1419" width="3" height="2.600"/><rect x="518.200" y="1419" width="3" height="2.600"/><rect x="524.400" y="1419" width="3" height="2.600"/></g></g>
<!-- kodi -->
<g><path d="M589 1398.500l13.500 13.200-13.500 13.300-13.500-13.300z" fill="#2f9fd6"/><path d="M584.500 1406v12M596 1404.500l-8 7 7.500 7.500" stroke="#fff" stroke-width="3" fill="none"/></g>
<!-- small icon -->
<g stroke="#b8b8b8" stroke-width="2" fill="none"><path d="M651 1411.500h14M658 1404v15M654.500 1406v11M661.500 1406v11M652.500 1408.500h11M652.500 1414.500h11"/></g>
<!-- tray -->
<path d="M1121.500 1417l10.700-10.700 10.800 10.700" stroke="#fff" stroke-width="2" fill="none"/>
<ellipse cx="1178.200" cy="1411.200" rx="11" ry="14.800" fill="#0a3478"/><path d="M1172 1405.500l11.500 11-5.500 5.500v-22l5.500 5.500-11.500 11" stroke="#fff" stroke-width="2" fill="none"/>
<rect x="1207" y="1397" width="30.500" height="29.500" fill="#1f1f1f"/><path d="M1217.500 1401.500h5l6 10-6 10h-5l6-10z" fill="#e5a00d"/>
<rect x="1253" y="1397.500" width="29" height="28.500" fill="#3a3f46"/><path d="M1256.500 1411.500q5-7.500 12-7.500h10.500v15.500h-10.500q-7 0-12-8z" fill="#76b900"/><path d="M1260.500 1411.500q3.500-4 8-4 4 0 4 4t-4 4q-4.500 0-8-4z" fill="#3a3f46"/><circle cx="1268" cy="1411.500" r="2" fill="#76b900"/>
<path d="M1299.500 1418q0-13 6-14.500 3-.5 5.500.5h3q2.500-1 5.500-.5 6 1.500 6 14.500 0 3-2.500 3-2 0-4.500-5h-12q-2.500 5-4.500 5-2.500 0-2.500-3z" fill="#e8e8e8"/><circle cx="1306" cy="1409.500" r="2" fill="#666"/><circle cx="1319" cy="1409.500" r="2" fill="#888"/><path d="M1315 1413.500l9 9M1324 1413.500l-9 9" stroke="#e81123" stroke-width="3"/>
<path d="M1346.500 1401v10h8M1354.500 1401v19.500M1362 1401v19.500" stroke="#fff" stroke-width="2" fill="none"/>
<circle cx="1401.800" cy="1411.800" r="8.500" fill="none" stroke="#f0602a" stroke-width="7"/><path d="M1400 1399.500l3-3 .5 4zM1404 1424l-3 3-.5-4z" fill="#f0602a"/>
<rect x="1432" y="1397" width="30" height="29.500" fill="#5a6a8c"/><path d="M1432 1404h30v5h-30z" fill="#c84838"/><path d="M1432 1409h10v17h-10z" fill="#d8a020"/><path d="M1442 1409h10v8h-10z" fill="#e8d040"/><path d="M1452 1409h10v17h-10z" fill="#3888d0"/><path d="M1442 1417h10v9.500h-10z" fill="#48a848"/><rect x="1441" y="1414" width="14" height="8" fill="#283040"/><path d="M1432 1397h30v7h-30z" fill="#788098"/>
<path d="M1478.500 1407.500h4.500l6.500-6.500v21.500l-6.500-6.500h-4.500z" stroke="#fff" stroke-width="1.800" fill="none"/><path d="M1493.500 1407.500q3 4 0 8.500M1497.500 1404q5.500 8 0 15.500M1501.500 1400.500q8.500 11.500 0 22.500" stroke="#fff" stroke-width="1.800" fill="none"/>
<g stroke="#fff" stroke-width="2" fill="none"><path d="M1530 1402h21.500v15.500H1530zM1532.500 1424.500h13M1539 1417.500v7"/><rect x="1523" y="1402" width="7.500" height="6.500"/><path d="M1526.500 1408.500v9"/></g>
<g stroke="#fff" stroke-width="1.800" fill="none"><path d="M1588.500 1421.500l9-20q2-3.500 4.500-2t1 5l-9 19.500-6.500 1.500zM1592 1415.500l4.500 2.500M1599 1410q5-1.500 5 2t-6 3.500"/><path d="M1586 1419q-8 .5-8 5t5 2"/></g>
<g stroke="#fff" fill="none"><rect x="1629" y="1400" width="41" height="22" stroke-width="2"/><path d="M1633.500 1405.500h32M1633.500 1410.500h32" stroke-width="2.200" stroke-dasharray="2.600 1.600"/><path d="M1633.500 1416h4M1640.500 1416h18M1661.500 1416h4" stroke-width="2.200"/></g>
<path d="M1843.500 1397.500h29.500v23h-10.500l-4.500 4.500-4.500-4.500h-10z" fill="#fff"/><path d="M1849.500 1403.500h18M1849.500 1408.500h18M1849.500 1413.500h11" stroke="#0b121b" stroke-width="2"/>
<path d="M1911.500 1384v56" stroke="#7a7e84" stroke-width="1.400"/>
</svg>
<svg class="abs" style="left:710.6px;top:1401px" width="21.4" height="22.6" viewBox="0 0 11 13" preserveAspectRatio="none"><path d="M7 0h3v1.04h-3zM6 1h4v1.04h-4zM6 2h3v1.04h-3zM6 3h4v1.04h-4zM7 4h4v1.04h-4zM7 5h4v1.04h-4zM3 6h8v1.04h-8zM2 7h8v1.04h-8zM1 8h4v1.04h-4zM1 9h3v1.04h-3zM1 10h3v1.04h-3zM0 11h4v1.04h-4zM1 12h2v1.04h-2z" fill="#000"/></svg>
<div class="t" style="left:746.500px;top:1400.500px;font-size:22.5px;color:#f4f4f4;letter-spacing:-0.400px">WinISD beta</div>
<div class="t" style="left:1694px;top:1400.500px;font-size:22px;color:#fff;transform-origin:0 0;transform:scaleX(.85)">DEU</div>
<div class="t" style="left:1758px;top:1400.500px;font-size:22px;color:#fff;transform-origin:0 0;transform:scaleX(.9)">03:41</div>
</body>
</html>
